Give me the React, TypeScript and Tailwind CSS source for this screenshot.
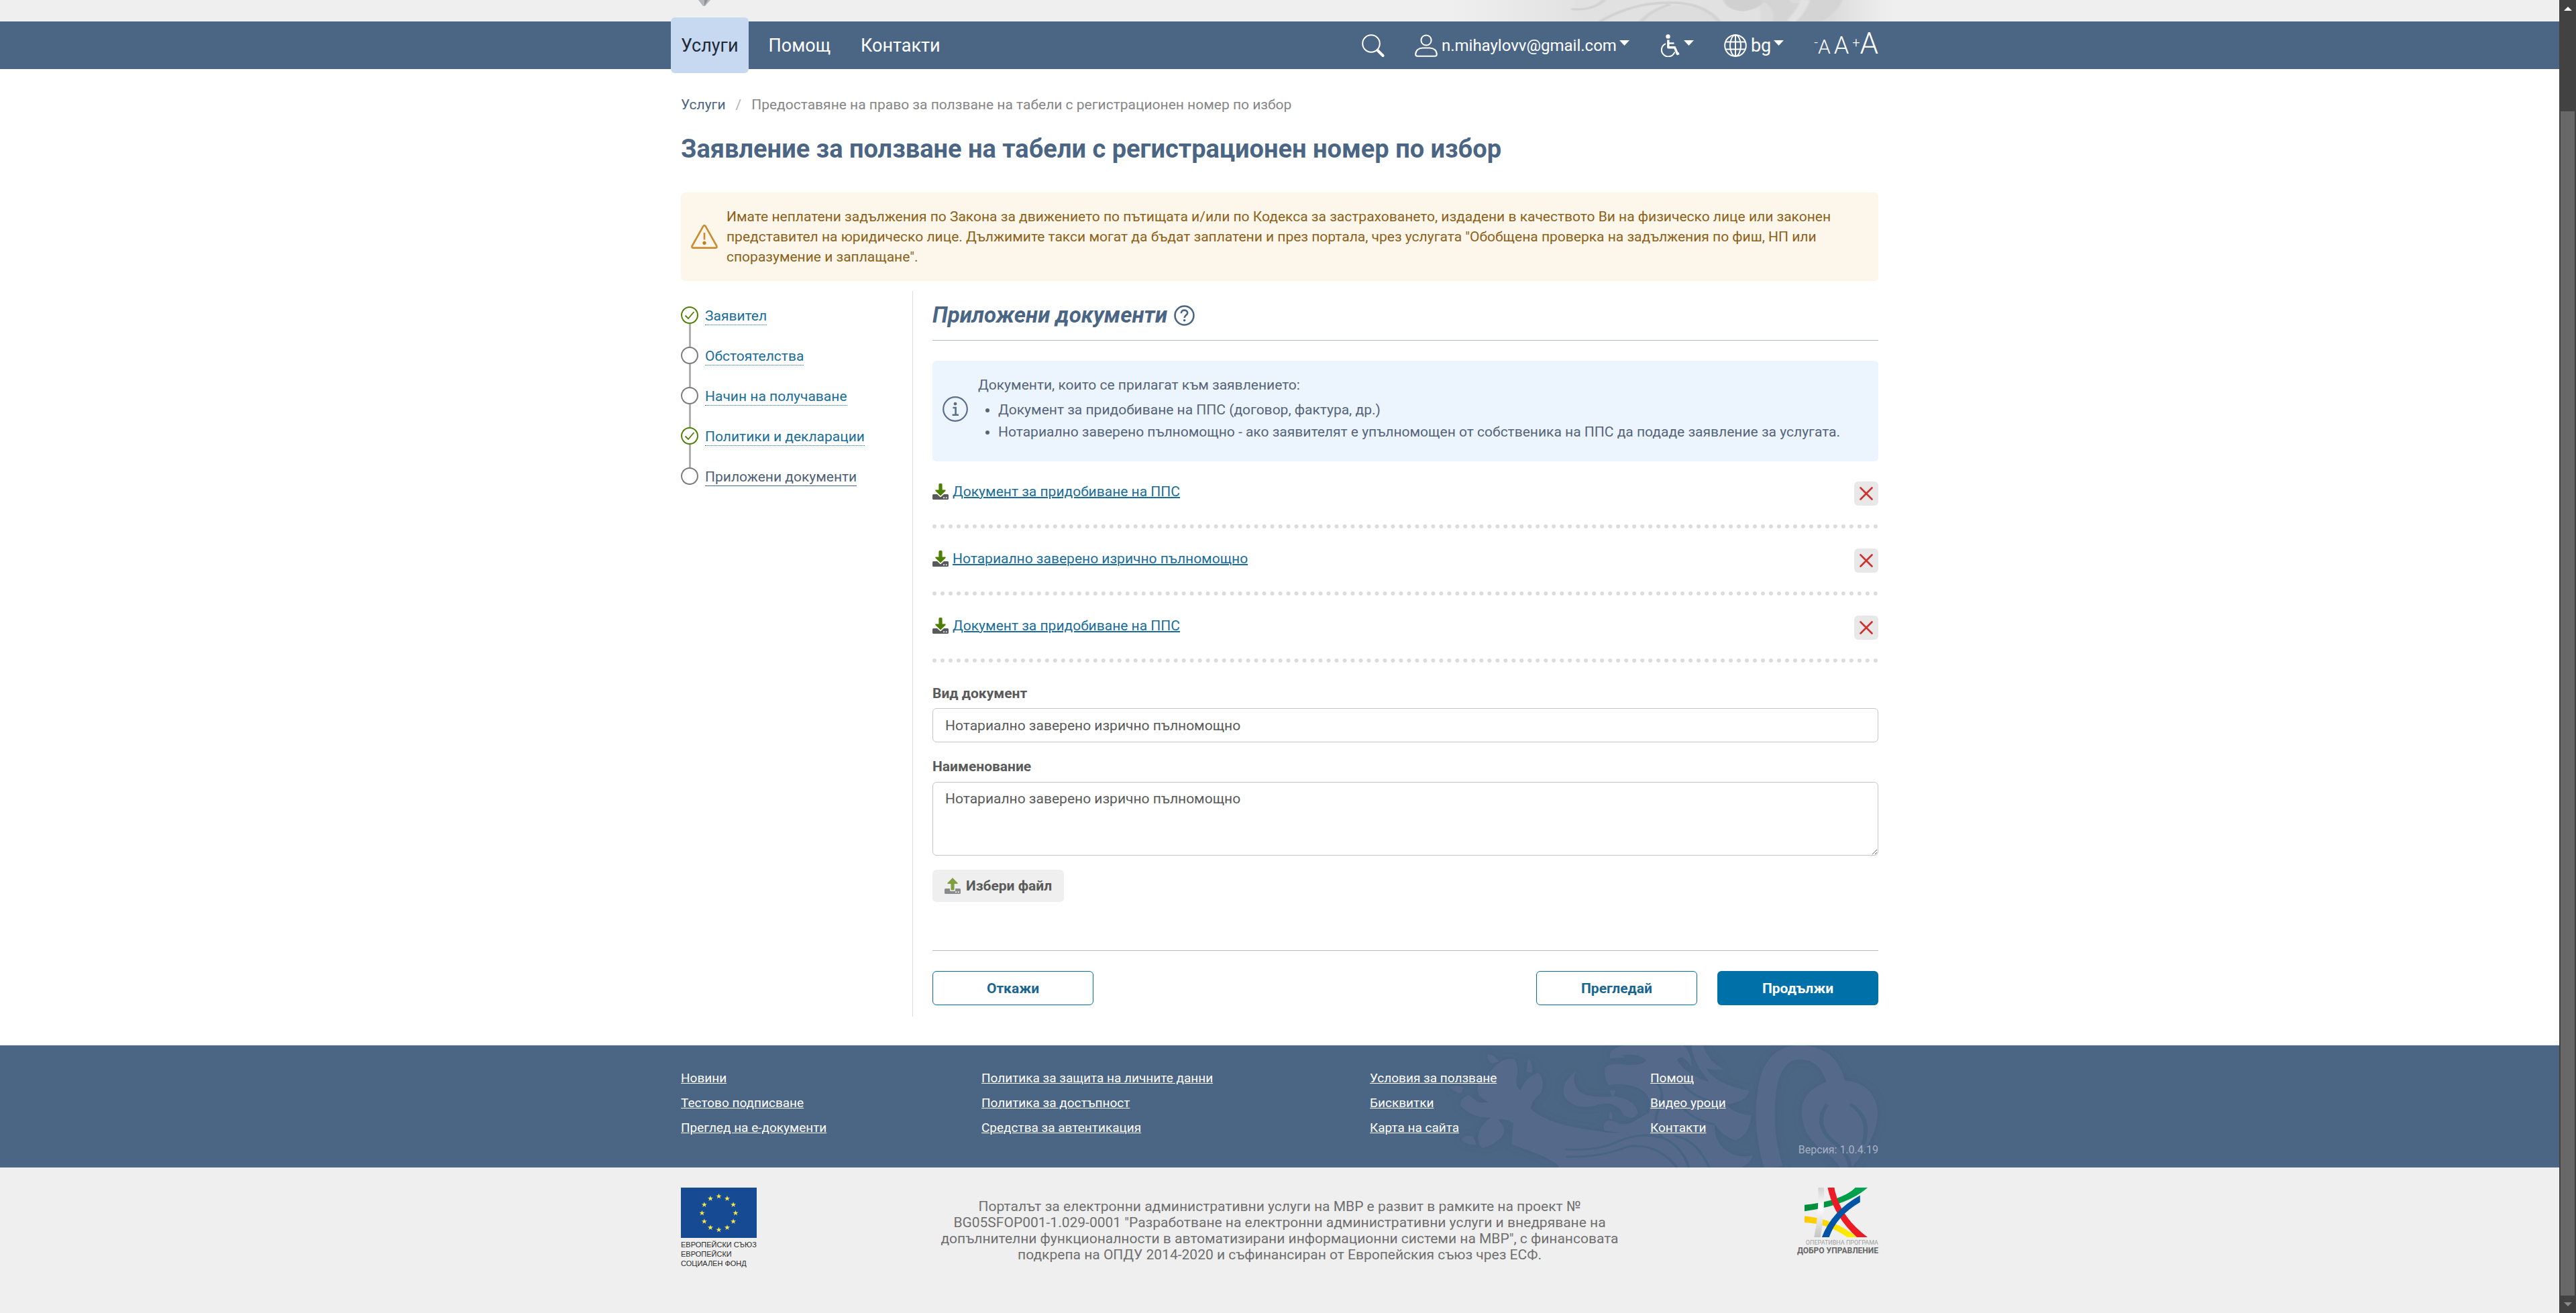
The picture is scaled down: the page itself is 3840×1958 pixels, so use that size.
import React from "react";

function Caret() {
  return (
    <svg className="mb-2 h-2 w-[15px]" viewBox="0 0 15 8" fill="currentColor" aria-hidden="true">
      <path d="M0 0H15L7.5 8Z" />
    </svg>
  );
}

function SearchIcon() {
  return (
    <svg className="size-[34px]" viewBox="0 0 34 34" fill="none" stroke="currentColor" aria-hidden="true">
      <circle cx="14" cy="14" r="12.8" strokeWidth="2" />
      <path d="M23.5 24L31.5 32" strokeWidth="4" strokeLinecap="round" />
    </svg>
  );
}

function UserIcon() {
  return (
    <svg className="size-[34px]" viewBox="0 0 34 34" fill="none" stroke="currentColor" strokeWidth="2" aria-hidden="true">
      <circle cx="17" cy="9" r="7.6" />
      <path d="M1.2 30C1.2 24 6 20.5 12 20.5H22C28 20.5 32.8 24 32.8 30C32.8 32 32 32.8 30 32.8H4C2 32.8 1.2 32 1.2 30Z" />
    </svg>
  );
}

function WheelchairIcon() {
  return (
    <svg className="h-[34px] w-[30px]" viewBox="0 0 30 34" fill="none" stroke="currentColor" aria-hidden="true">
      <circle cx="12.5" cy="3.4" r="3.2" fill="currentColor" stroke="none" />
      <path d="M12.8 8.5V19.8H22.5L26.5 29.5L29 28.5" strokeWidth="3.4" strokeLinejoin="round" />
      <path d="M13.5 13.5H21.5" strokeWidth="2.4" />
      <path d="M9 14.2A10 10 0 1 0 22.4 26.5" strokeWidth="2" />
    </svg>
  );
}

function GlobeIcon() {
  return (
    <svg className="size-[34px]" viewBox="0 0 34 34" fill="none" stroke="currentColor" strokeWidth="2" aria-hidden="true">
      <circle cx="17" cy="17" r="15.8" />
      <ellipse cx="17" cy="17" rx="8" ry="15.8" />
      <path d="M17 1V33M3 11.5H31M3 22.5H31" />
    </svg>
  );
}

function WarningIcon() {
  return (
    <svg className="h-9 w-10 shrink-0" viewBox="0 0 40 36" fill="none" stroke="#cb8c30" strokeWidth="2.6" strokeLinejoin="round" aria-hidden="true">
      <path d="M18.4 2.2Q20 .2 21.6 2.2L38.4 32Q39 34.6 36.6 34.6H3.4Q1 34.6 1.6 32Z" />
      <path d="M20 12V22.5" strokeWidth="2.6" />
      <circle cx="20" cy="27.3" r="2.6" fill="#c07d1c" stroke="none" />
    </svg>
  );
}

function InfoIcon() {
  return (
    <svg className="size-[38px] shrink-0" viewBox="0 0 38 38" fill="none" stroke="#5c6f8a" strokeWidth="2.2" aria-hidden="true">
      <circle cx="19" cy="19" r="17.8" />
      <circle cx="19" cy="11.2" r="2.4" fill="#5c6f8a" stroke="none" />
      <path d="M15.4 17H19.6V27.4M14.6 27.8H24" strokeWidth="2.6" />
    </svg>
  );
}

function HelpIcon() {
  return (
    <svg className="size-[31px]" viewBox="0 0 31 31" fill="none" stroke="#4b6584" aria-hidden="true">
      <circle cx="15.5" cy="15.5" r="14" strokeWidth="2.6" />
      <path d="M10.8 12.2C10.8 9 12.8 7.6 15.5 7.6S20.2 9.2 20.2 11.8C20.2 15 15.6 15.2 15.6 19" strokeWidth="2.6" />
      <circle cx="15.6" cy="22.8" r="1.8" fill="#4b6584" stroke="none" />
    </svg>
  );
}

function DownloadIcon() {
  return (
    <svg className="mt-[3px] size-6" viewBox="0 0 24 24" aria-hidden="true">
      <path d="M0 17.5Q0 16 1.5 16H7L12 20.5L17 16H22.5Q24 16 24 17.5V22.5Q24 24 22.5 24H1.5Q0 24 0 22.5Z" fill="#58595b" />
      <path d="M9.4 1.5Q9.4 0 10.9 0H13.1Q14.6 0 14.6 1.5V9.5H19Q20.6 9.8 19.4 11.2L12 18.6L4.6 11.2Q3.4 9.8 5 9.5H9.4Z" fill="#4d8000" />
      <rect x="16.2" y="20.4" width="1.8" height="1.8" fill="#fff" />
      <rect x="19.8" y="20.4" width="1.8" height="1.8" fill="#fff" />
    </svg>
  );
}

function UploadIcon() {
  return (
    <svg className="size-6" viewBox="0 0 24 24" aria-hidden="true">
      <path d="M0 17.5Q0 16 1.5 16H8V18.5Q8 20 9.5 20H14.5Q16 20 16 18.5V16H22.5Q24 16 24 17.5V22.5Q24 24 22.5 24H1.5Q0 24 0 22.5Z" fill="#8a8b8d" />
      <path d="M9.4 17.5V9H5Q3.4 8.7 4.6 7.4L12 0L19.4 7.4Q20.6 8.7 19 9H14.6V17.5Q14.6 18.5 13.6 18.5H10.4Q9.4 18.5 9.4 17.5Z" fill="#7f9f40" />
      <rect x="16.2" y="20.4" width="1.8" height="1.8" fill="#fff" />
      <rect x="19.8" y="20.4" width="1.8" height="1.8" fill="#fff" />
    </svg>
  );
}

function HeaderLion() {
  return (
    <svg className="absolute -right-20 top-0 h-8 w-[960px]" viewBox="0 0 1568 96" preserveAspectRatio="none" fill="none" aria-hidden="true">
      <defs>
        <linearGradient id="haze" x1="0" x2="1">
          <stop offset="0.25" stopColor="#e0e0e0" stopOpacity="0" />
          <stop offset="0.5" stopColor="#dedede" />
          <stop offset="0.84" stopColor="#dadada" />
          <stop offset="0.94" stopColor="#e0e0e0" stopOpacity="0" />
        </linearGradient>
        <filter id="soft">
          <feGaussianBlur stdDeviation="3 2" />
        </filter>
      </defs>
      <rect width="1568" height="96" fill="url(#haze)" />
      <g filter="url(#soft)">
        <path d="M700 0Q690 50 730 96H850Q900 20 990 20Q1030 40 1050 96H1150V0Z" fill="#e1e1e1" />
        <path d="M1060 0Q1070 50 1110 50Q1150 40 1160 0Z" fill="#d0d0d0" />
        <path d="M1150 0Q1190 40 1180 96H1300Q1340 50 1350 0H1260Q1230 30 1220 0Z" fill="#d4d4d4" />
        <path d="M1260 0Q1250 50 1225 96" stroke="#e2e2e2" strokeWidth="22" />
        <path d="M690 40Q740 50 770 0M760 96Q840 10 930 12Q1010 10 1050 96M860 96Q880 50 930 20" stroke="#d2d2d2" strokeWidth="10" />
      </g>
    </svg>
  );
}

function FooterLion() {
  return (
    <svg className="absolute -right-5 top-0 h-[182px] w-[680px]" viewBox="0 27 1568 546" preserveAspectRatio="none" fill="none" aria-hidden="true">
      <defs>
        <filter id="lionShade" x="-10%" y="-10%" width="120%" height="120%">
          <feDropShadow dx="0" dy="0" stdDeviation="16" floodColor="#40587a" floodOpacity="0.5" />
        </filter>
      </defs>
      <g filter="url(#lionShade)">
        <path fill="#546b8a" d="M178 65Q205 70 218 100L195 108Q178 95 178 65ZM318 85Q340 120 330 150L312 145ZM50 212Q80 200 95 215L88 240Q65 240 50 212ZM88 450Q100 425 130 435L140 470Q110 475 88 450Z" />
        <path fill="#546b8a" d="M205 118Q240 78 272 90Q288 130 278 172Q274 215 292 228Q315 160 355 150Q378 190 362 240Q325 280 328 312Q390 385 560 410Q620 430 700 400Q745 340 735 270Q720 215 660 205Q630 195 600 205Q578 190 582 125Q600 105 645 112Q700 118 720 100Q700 70 600 85Q590 40 650 27H852Q880 60 880 125Q850 60 830 90Q860 160 940 190Q880 90 880 27H920Q935 95 990 135Q960 140 930 130Q960 200 1078 230Q1070 280 1000 290Q1020 330 1085 340Q1078 430 1030 452Q985 430 960 380Q955 470 1015 510Q1050 530 1090 520Q1080 560 1050 573H425Q420 540 262 470Q262 430 268 375Q235 350 215 360Q250 400 225 440Q190 480 160 486Q135 450 155 400Q165 370 190 350Q120 350 85 295Q85 260 115 250L135 270Q150 290 182 280Q130 250 150 190Q180 160 205 118Z" />
        <path fill="#546b8a" d="M480 145Q425 200 445 262Q485 322 560 292Q620 272 648 340Q680 365 695 330Q690 272 620 255Q560 262 520 250Q462 225 480 145ZM598 228H618L610 262ZM600 320Q612 340 606 360L596 352ZM580 408Q570 350 612 365Q650 395 690 360L730 330V400Q660 430 580 408Z" />
        <path stroke="#4a6383" strokeWidth="9" d="M445 492Q560 500 620 460Q700 410 780 440Q850 480 870 573M450 525Q560 530 660 480Q760 460 830 573M780 440Q740 380 770 300Q790 240 760 190M820 430Q900 450 940 573M850 200Q890 270 1000 290M840 290Q880 360 960 380" />
        <path fill="#4a6383" d="M640 70Q700 60 725 95Q690 120 645 105Q670 95 640 70Z" />
        <path stroke="#546b8a" strokeWidth="64" d="M1162 573Q1120 400 1140 220Q1160 55 1255 58Q1350 62 1376 190" />
        <path fill="#546b8a" d="M1345 190Q1258 230 1258 325Q1262 430 1325 490Q1370 530 1390 573H1430Q1520 440 1520 325Q1510 195 1405 182Z" />
        <path stroke="#4a6383" strokeWidth="14" d="M1345 290Q1300 380 1360 450Q1420 510 1425 573M1425 290Q1500 350 1470 470" />
      </g>
    </svg>
  );
}

const STAR = "M0 -5L1.2 -1.6H4.8L1.9 .6L3 4L0 1.9L-3 4L-1.9 .6L-4.8 -1.6H-1.2Z";

function EuFlag() {
  return (
    <svg className="block h-[75px] w-[113px]" viewBox="0 0 113 75" role="img" aria-label="Европейски съюз">
      <rect width="113" height="75" fill="#164b94" />
      {Array.from({ length: 12 }, (_, i) => {
        const a = (i * Math.PI) / 6;
        return <path key={i} d={STAR} fill="#f9e94e" transform={`translate(${56.5 + 25 * Math.sin(a)} ${38 - 25 * Math.cos(a)}) scale(.85)`} />;
      })}
    </svg>
  );
}

function GovernanceLogo() {
  return (
    <svg className="mr-4 h-[74px] w-[94px]" viewBox="1270 663 218 221" preserveAspectRatio="none" aria-hidden="true">
      <defs>
        <linearGradient id="silver" x1="0" y1="0" x2="0" y2="1">
          <stop offset="0" stopColor="#d2d2d2" />
          <stop offset="0.4" stopColor="#ffffff" />
          <stop offset="1" stopColor="#c4c4c4" />
        </linearGradient>
        <linearGradient id="green" x1="0" x2="1">
          <stop offset="0" stopColor="#008c3a" />
          <stop offset="1" stopColor="#00a651" />
        </linearGradient>
        <linearGradient id="yellow" x1="0" x2="1">
          <stop offset="0" stopColor="#ffc800" />
          <stop offset="1" stopColor="#fff200" />
        </linearGradient>
      </defs>
      <path fill="url(#yellow)" d="M1270 790Q1370 800 1452 884H1418Q1350 822 1270 818Z" />
      <path fill="url(#green)" d="M1270 740Q1400 722 1446 663H1488Q1420 742 1270 768Z" />
      <path fill="url(#silver)" d="M1317 663H1337Q1340 780 1325 884H1303Q1320 780 1317 663Z" />
      <path fill="#ed1c24" d="M1350 663H1373Q1390 790 1488 884H1451Q1370 790 1350 663Z" />
      <path fill="#0054a6" d="M1462 697V728Q1380 790 1355 884H1330Q1362 770 1462 697Z" />
    </svg>
  );
}

const steps = [
  { label: "Заявител", done: true },
  { label: "Обстоятелства", done: false },
  { label: "Начин на получаване", done: false },
  { label: "Политики и декларации", done: true },
  { label: "Приложени документи", done: false, current: true },
];

function Steps() {
  return (
    <ol className="pt-[23px]">
      {steps.map((s, i) => (
        <li key={s.label} className="flex items-start gap-2.5">
          <span className="flex flex-col items-center">
            <svg className="size-[26px]" viewBox="0 0 26 26" fill="none" aria-hidden="true">
              <circle cx="13" cy="13" r="12" stroke={s.done ? "#4d8000" : "#7a7a7a"} strokeWidth="2" />
              {s.done && <path d="M6.5 13.5L11 18L19.5 8" stroke="#4d8000" strokeWidth="1.8" />}
            </svg>
            {i < steps.length - 1 && <span className="h-[34px] w-[3px] bg-[#b0b0b0]" />}
          </span>
          <a
            href="#step"
            aria-current={s.current ? "step" : undefined}
            className={
              s.current
                ? "mt-0.5 border-b border-solid border-[#4b6584] leading-[25px] text-[#4f5f78]"
                : "mt-0.5 border-b border-dotted border-[#1a6d99] leading-[25px] text-[#1a6d99]"
            }
          >
            {s.label}
          </a>
        </li>
      ))}
    </ol>
  );
}

const documents = ["Документ за придобиване на ППС", "Нотариално заверено изрично пълномощно", "Документ за придобиване на ППС"];

const footerColumns = [
  ["Новини", "Тестово подписване", "Преглед на е-документи"],
  ["Политика за защита на личните данни", "Политика за достъпност", "Средства за автентикация"],
  ["Условия за ползване", "Бисквитки", "Карта на сайта"],
  ["Помощ", "Видео уроци", "Контакти"],
];

const container = "mx-auto w-full max-w-[1785px]";

export default function App() {
  return (
    <div className="flex min-h-screen bg-white font-[Roboto,sans-serif] text-[21px] leading-[30px] text-[#5a5a5a]">
      <div className="flex min-w-0 flex-1 flex-col">
        <header>
          <div className="overflow-hidden bg-[#efefef]">
            <div className={`${container} relative h-8`}>
              <svg className="ml-[26px] h-[9px] w-[18px]" viewBox="0 0 18 9" aria-hidden="true">
                <path d="M0 0H18L10 9H7Z" fill="#b4b7ba" />
                <path d="M9 0H14L9 9Z" fill="#8d9195" />
              </svg>
              <HeaderLion />
            </div>
          </div>
          <div className="bg-[#4b6584]">
            <div className={`${container} flex h-[71px] items-center text-white`}>
              <nav className="-mx-[15px] flex items-center gap-[15px] text-[27px]">
                <a href="#services" aria-current="page" className="relative -my-1.5 flex h-[83px] items-center rounded-md bg-[#c7d9f1] px-[15px] text-[#1f2937]">
                  Услуги
                </a>
                <a href="#help" className="px-[15px]">Помощ</a>
                <a href="#contacts" className="px-[15px]">Контакти</a>
              </nav>
              <div className="ml-auto flex items-center gap-[45px]">
                <button type="button" aria-label="Търсене">
                  <SearchIcon />
                </button>
                <button type="button" className="flex items-center gap-1.5 text-2xl">
                  <UserIcon />
                  <span className="flex items-center gap-1">
                    n.mihaylovv@gmail.com
                    <Caret />
                  </span>
                </button>
                <button type="button" aria-label="Достъпност" className="flex items-center gap-1.5">
                  <WheelchairIcon />
                  <Caret />
                </button>
                <button type="button" className="flex items-center gap-1.5 text-[27px]">
                  <GlobeIcon />
                  <span className="flex items-center gap-1">
                    bg
                    <Caret />
                  </span>
                </button>
                <div className="flex items-baseline gap-[5px] whitespace-nowrap font-light leading-[34px]">
                  <button type="button" aria-label="Намали шрифта" className="text-[30px]">
                    <sup className="text-xl">-</sup>A
                  </button>
                  <button type="button" aria-label="Нормален шрифт" className="text-4xl leading-[34px]">A</button>
                  <button type="button" aria-label="Увеличи шрифта" className="text-[44px]">
                    <sup className="text-xl">+</sup>A
                  </button>
                </div>
              </div>
            </div>
          </div>
        </header>

        <main className={`${container} pb-[42px] pt-[38px]`}>
          <nav aria-label="Навигация" className="flex">
            <a href="#services" className="text-[#4b6584]">Услуги</a>
            <span className="px-[15px] text-[#b0b0b0]">/</span>
            <span className="text-[#868686]">Предоставяне на право за ползване на табели с регистрационен номер по избор</span>
          </nav>
          <h1 className="mt-[27px] text-[38px] font-bold leading-[48px] text-[#4b6584]">
            Заявление за ползване на табели с регистрационен номер по избор
          </h1>

          <div role="alert" className="mt-[41px] flex items-center gap-[13px] rounded-md bg-[#fdf6ea] py-[21px] pl-[15px] pr-[21px] text-[#8c6119]">
            <WarningIcon />
            <p>
              Имате неплатени задължения по Закона за движението по пътищата и/или по Кодекса за застраховането, издадени в качеството Ви на физическо лице или
              законен представител на юридическо лице. Дължимите такси могат да бъдат заплатени и през портала, чрез услугата "Обобщена проверка на задължения по
              фиш, НП или споразумение и заплащане".
            </p>
          </div>

          <div className="mt-[15px] flex">
            <aside className="w-[346px] shrink-0 border-r border-[#dcdcdc]">
              <Steps />
            </aside>
            <section className="min-w-0 flex-1 pb-[17px] pl-[29px] pt-4">
              <div className="flex items-center gap-2.5 border-b border-[#b4b9bd] pb-[17px]">
                <h2 className="text-[33px] font-bold italic leading-10 text-[#4b6584]">Приложени документи</h2>
                <button type="button" aria-label="Помощ за секцията">
                  <HelpIcon />
                </button>
              </div>

              <div className="mt-[30px] flex items-center gap-[15px] rounded-md bg-[#ecf5fd] pb-[27px] pl-[15px] pr-[21px] pt-[21px] text-[#56647a]">
                <InfoIcon />
                <div>
                  <p>Документи, които се прилагат към заявлението:</p>
                  <ul className="mt-1.5 list-disc pl-[30px] leading-[33px]">
                    <li>Документ за придобиване на ППС (договор, фактура, др.)</li>
                    <li>Нотариално заверено пълномощно - ако заявителят е упълномощен от собственика на ППС да подаде заявление за услугата.</li>
                  </ul>
                </div>
              </div>

              <ul>
                {documents.map((name, i) => (
                  <li key={i} className="flex items-start justify-between border-b-[6px] border-dotted border-[#dcdcdc] pb-7 pt-[30px]">
                    <a href="#document" className="flex gap-1.5 text-[#1a6d99]">
                      <DownloadIcon />
                      <span className="underline decoration-2">{name}</span>
                    </a>
                    <button type="button" aria-label={`Изтрий ${name}`} className="flex size-9 items-center justify-center rounded-md bg-[#e8e8e8]">
                      <svg className="size-5" viewBox="0 0 20 20" fill="none" stroke="#cc3230" strokeWidth="2.6" strokeLinecap="round" aria-hidden="true">
                        <path d="M1.5 1.5L18.5 18.5M18.5 1.5L1.5 18.5" />
                      </svg>
                    </button>
                  </li>
                ))}
              </ul>

              <form onSubmit={(e) => e.preventDefault()}>
                <label htmlFor="doc-type" className="mt-[31px] block font-bold">Вид документ</label>
                <input
                  id="doc-type"
                  type="text"
                  defaultValue="Нотариално заверено изрично пълномощно"
                  className="mt-[7px] block h-[51px] w-full rounded-md border border-[#c6c6c6] px-[18px]"
                />
                <label htmlFor="doc-name" className="mt-[21px] block font-bold">Наименование</label>
                <textarea
                  id="doc-name"
                  defaultValue="Нотариално заверено изрично пълномощно"
                  className="mt-2 block h-[110px] w-full resize-y rounded-md border border-[#c6c6c6] px-[18px] py-[9px]"
                />
                <button type="button" className="mt-[21px] flex h-12 items-center gap-2 rounded-md bg-[#efefef] px-[18px] font-bold">
                  <UploadIcon />
                  Избери файл
                </button>
                <div className="mt-[72px] flex gap-[30px] border-t border-[#b4b9bd] pt-[30px] font-bold">
                  <button type="button" className="mr-auto h-[51px] w-60 rounded-md border border-[#0070a8] text-[#1a6590]">Откажи</button>
                  <button type="button" className="h-[51px] w-60 rounded-md border border-[#0070a8] text-[#1a6590]">Прегледай</button>
                  <button type="submit" className="h-[51px] w-60 rounded-md bg-[#0070a8] text-white">Продължи</button>
                </div>
              </form>
            </section>
          </div>
        </main>

        <footer className="flex flex-1 flex-col">
          <div className="overflow-hidden border-t border-[#d5dde6] bg-[#4b6584]">
            <div className={`${container} relative pb-[14px] pt-[30px]`}>
              <FooterLion />
              <div className="relative grid grid-cols-[448fr_579fr_418fr_340fr] text-[19px] leading-[37px] text-white">
                {footerColumns.map((col) => (
                  <ul key={col[0]}>
                    {col.map((t) => (
                      <li key={t}>
                        <a href="#page" className="underline">{t}</a>
                      </li>
                    ))}
                  </ul>
                ))}
              </div>
              <p className="relative mt-0.5 text-right text-base leading-[25px] text-[#a5b2c4]">Версия: 1.0.4.19</p>
            </div>
          </div>
          <div className="flex-1 bg-[#efefef]">
            <div className={`${container} grid grid-cols-[1fr_auto_1fr] items-start pt-[30px]`}>
              <div className="font-['Liberation_Sans',Arial,sans-serif] text-[11px] leading-[14px] text-[#2b2b2b]">
                <EuFlag />
                <p className="mt-[3px]">ЕВРОПЕЙСКИ СЪЮЗ</p>
                <p>ЕВРОПЕЙСКИ</p>
                <p>СОЦИАЛЕН ФОНД</p>
              </div>
              <p className="mt-4 max-w-[1020px] text-center leading-6 text-[#6f6f6f]">
                Порталът за електронни административни услуги на МВР е развит в рамките на проект № BG05SFOP001-1.029-0001 "Разработване на електронни
                административни услуги и внедряване на допълнителни функционалности в автоматизирани информационни системи на МВР", с финансовата подкрепа на ОПДУ
                2014-2020 и съфинансиран от Европейския съюз чрез ЕСФ.
              </p>
              <div className="flex flex-col items-end text-[#666666]">
                <GovernanceLogo />
                <p className="mt-[3px] text-[9px] leading-[10px] text-[#a0a0a0]">ОПЕРАТИВНА ПРОГРАМА</p>
                <p className="text-xs font-bold leading-[14px]">ДОБРО УПРАВЛЕНИЕ</p>
              </div>
            </div>
          </div>
        </footer>
      </div>

      <div className="flex w-[25px] shrink-0 flex-col items-center bg-[#424242]" aria-hidden="true">
        <svg className="mt-2.5 h-1.5 w-3" viewBox="0 0 12 6" fill="#fff">
          <path d="M6 0L12 6H0Z" />
        </svg>
        <span className="mt-[150px] w-[21px] flex-1 bg-[#686868]" />
        <svg className="mb-2.5 mt-[10px] h-1.5 w-3" viewBox="0 0 12 6" fill="#8a8a8a">
          <path d="M0 0H12L6 6Z" />
        </svg>
      </div>
    </div>
  );
}
